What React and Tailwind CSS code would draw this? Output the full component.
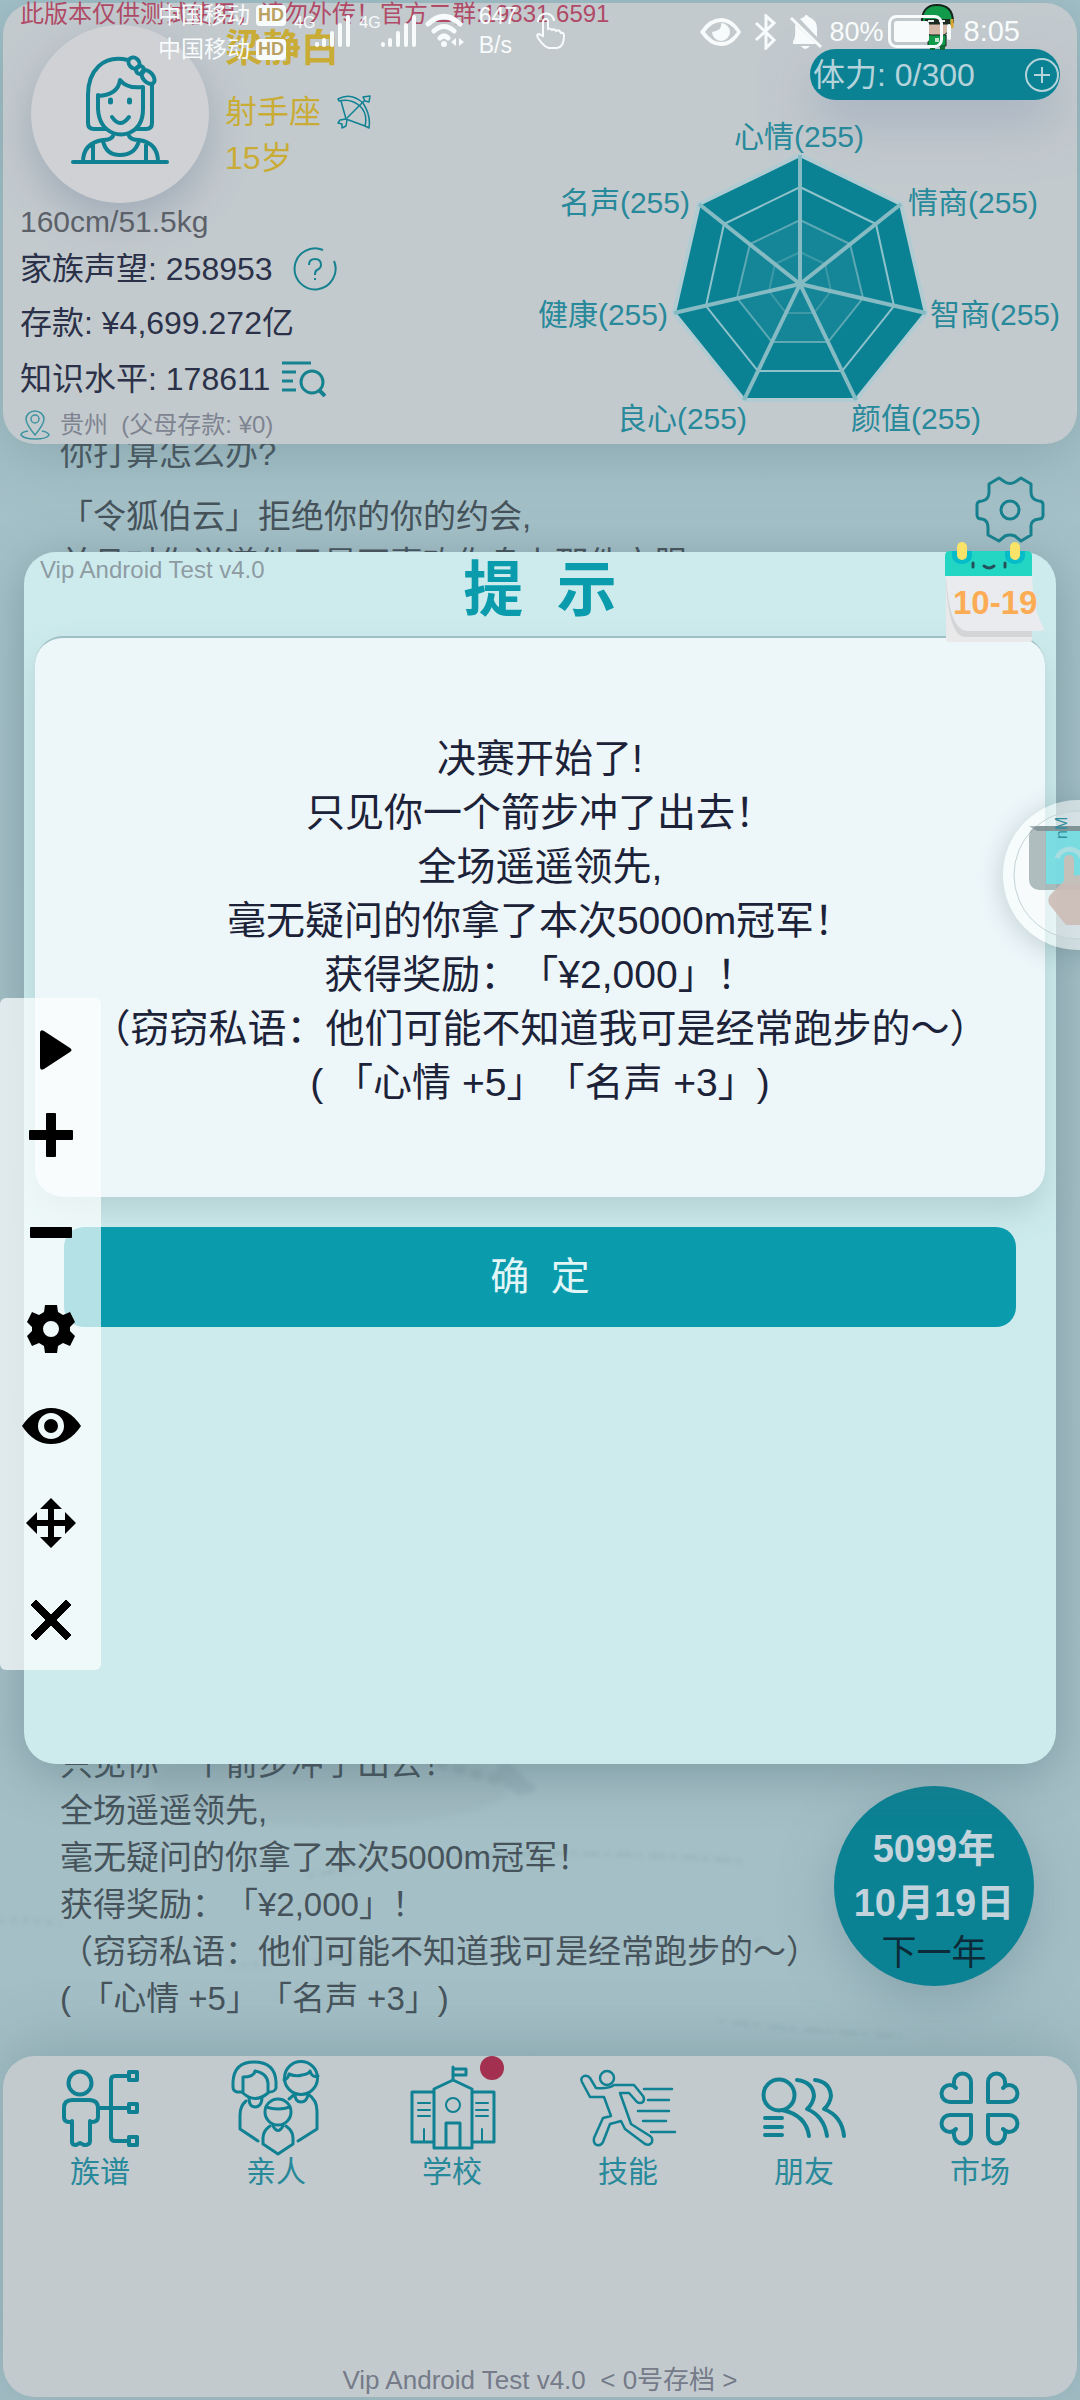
import React from 'react';

const eventLines = [
	'决赛开始了!',
	'只见你一个箭步冲了出去！',
	'全场遥遥领先,',
	'毫无疑问的你拿了本次5000m冠军！',
	'获得奖励：「¥2,000」！',
	'（窃窃私语：他们可能不知道我可是经常跑步的～）',
	'( 「心情 +5」「名声 +3」)',
];

const stats = [
	{ name: '心情', value: 255, x: 799, y: 147, anchor: 'middle' },
	{ name: '情商', value: 255, x: 908, y: 213, anchor: 'start' },
	{ name: '智商', value: 255, x: 930, y: 325, anchor: 'start' },
	{ name: '颜值', value: 255, x: 851, y: 429, anchor: 'start' },
	{ name: '良心', value: 255, x: 747, y: 429, anchor: 'end' },
	{ name: '健康', value: 255, x: 668, y: 325, anchor: 'end' },
	{ name: '名声', value: 255, x: 690, y: 213, anchor: 'end' },
];

const CENTER_X = 800;
const CENTER_Y = 284;
const RADIUS = 129;

function corner(index, ratio) {
	const angle = (Math.PI * 2 * index) / stats.length - Math.PI / 2;
	return [
		Math.round(CENTER_X + Math.cos(angle) * RADIUS * ratio),
		Math.round(CENTER_Y + Math.sin(angle) * RADIUS * ratio),
	];
}

function ring(ratio) {
	return stats.map((item, i) => corner(i, ratio).join(',')).join(' ');
}

function RadarChart() {
	return (
		<svg
			viewBox="530 100 540 342"
			className="w-[540px] h-[342px] text-[30px]"
			role="img"
			aria-label="属性"
		>
			<polygon
				points={ring(1)}
				fill="#0b8294"
				stroke="#b0ccd2"
				strokeWidth="4"
			/>
			<polygon points={ring(0.5)} fill="#ffffff" opacity="0.04" />
			<polygon
				points={ring(0.75)}
				fill="none"
				stroke="#8fc2ca"
				strokeWidth="2"
			/>
			<polygon
				points={ring(0.5)}
				fill="none"
				stroke="#5da8b3"
				strokeWidth="2"
			/>
			<polygon
				points={ring(0.25)}
				fill="none"
				stroke="#3e99a6"
				strokeWidth="2"
			/>
			{stats.map((item, i) => (
				<line
					key={item.name}
					x1={CENTER_X}
					y1={CENTER_Y}
					x2={corner(i, 1)[0]}
					y2={corner(i, 1)[1]}
					stroke="#86bbc4"
					strokeWidth="4"
				/>
			))}
			{stats.map((item) => (
				<text
					key={item.name}
					x={item.x}
					y={item.y}
					textAnchor={item.anchor}
					fill="#27899a"
				>
					{item.name}({item.value})
				</text>
			))}
		</svg>
	);
}

function GirlIcon() {
	return (
		<svg
			viewBox="0 0 178 178"
			className="w-full h-full"
			fill="none"
			stroke="#0f8193"
			strokeWidth="4"
			strokeLinecap="round"
			strokeLinejoin="round"
		>
			<path d="M97 35C72 29 57 46 57 70V98Q57 104 63 104H74M106 104H115Q121 104 121 98V60" />
			<path d="M67 70V84Q68 102 82 108Q90 111 98 108Q112 102 112 84V63" />
			<path d="M67 71Q87 70 89 55Q96 64 112 62" />
			<ellipse cx="103" cy="38" rx="6" ry="5" transform="rotate(48 103 38)" />
			<circle cx="109" cy="45" r="4" />
			<ellipse cx="117" cy="52" rx="8" ry="5" transform="rotate(48 117 52)" />
			<path d="M79.500 75v2M98.500 75v2" strokeWidth="5" />
			<path d="M81 92Q89 104 98 92" />
			<path d="M42 137H136M82 111Q80 115 72 115Q52 118 52 137M98 111Q100 115 108 115Q127 118 127 137M62 120V136M115 120V136" />
			<path d="M72 116Q75 130 89 130Q104 130 108 116" />
		</svg>
	);
}

function BowIcon() {
	return (
		<svg
			viewBox="0 0 34 34"
			className="w-[34px] h-[34px]"
			fill="none"
			stroke="#0f8193"
			strokeWidth="1.500"
			strokeLinejoin="round"
		>
			<path d="M1 4Q14-3 26 8Q34 20 32 33L28 31Q31 19 23 11Q14 3 2 6Z" />
			<path d="M4 6L9 24L28 31M10 23L28 5M26 2L33 1L32 7L28 6Z" />
			<path d="M9 24L3 25L1 28L5 29L5 33L9 31L10 25" />
		</svg>
	);
}

function HeroSprite() {
	return (
		<svg viewBox="0 0 36 46" className="w-9 h-[46px]">
			<path d="M3 20Q2 1 18 1Q34 1 34 18L31 22H5Z" fill="#119a4a" stroke="#14261c" strokeWidth="2" />
			<path d="M7 20H29V28L24 32H12L7 28Z" fill="#d5b9a8" stroke="#14261c" strokeWidth="1" />
			<path d="M6 15H31V20H6Z" fill="#1d2b23" />
			<path d="M9 17h6M20 17h6" stroke="#e8eeee" strokeWidth="2" />
			<path d="M33 15v9" stroke="#d9a531" strokeWidth="3" />
			<path d="M9 31H27V42H9Z" fill="#119a4a" stroke="#14261c" strokeWidth="1" />
			<path d="M16 34h4v4h-4z" fill="#bfe3cd" />
			<path d="M11 42h5v4h-5zM21 42h5v4h-5z" fill="#0d6d36" />
		</svg>
	);
}

function Header() {
	return (
		<header className="relative z-10 m-[3px] mb-0 rounded-[32px] bg-[#c3cace] shadow-[0_10px_60px_rgba(90,120,130,0.35)]">
			<div className="absolute right-[122px] top-px">
				<HeroSprite />
			</div>
			<p className="pl-[17px] text-2xl leading-[22px] text-[#b04a66] whitespace-nowrap">
				此版本仅供测试使用，请勿外传！官方二群:19831 6591
			</p>
			<div className="flex justify-between">
				<div className="pl-[17px] text-[#2b3148] text-[32px] whitespace-nowrap">
					<div className="flex">
						<div className="ml-[11px] w-[178px] h-[178px] rounded-full bg-[#cfd1d5] shadow-[0_16px_40px_rgba(110,125,150,0.4)]">
							<GirlIcon />
						</div>
						<div className="ml-4 leading-[46px] text-[#c9ac36]">
							<h1 className="mb-[18px] text-[38px] font-bold">梁静白</h1>
							<p className="flex items-center gap-4">
								射手座 <BowIcon />
							</p>
							<p>15岁</p>
						</div>
					</div>
					<p className="text-[30px] leading-[38px] text-[#5c6068]">160cm/51.5kg</p>
					<div className="flex items-center h-[55px] gap-5">
						家族声望: 258953
						<button type="button" aria-label="说明">
							<svg viewBox="0 0 44 44" className="w-11 h-11" fill="none" stroke="#16828f" strokeWidth="2">
								<path d="M30 3A20.500 20.500 0 1 0 41 14" />
								<path d="M16 18Q16 12 22 12Q28 12 28 18Q28 21 24 23Q22 24 22 28" />
								<path d="M22 31v2" />
							</svg>
						</button>
					</div>
					<p className="h-[55px] leading-[55px]">存款: ¥4,699.272亿</p>
					<div className="flex items-center h-[55px] gap-3">
						知识水平: 178611
						<button type="button" aria-label="查看知识">
							<svg viewBox="0 0 44 36" className="w-11 h-9" fill="none" stroke="#16828f" strokeWidth="3">
								<path d="M0 2H29M0 11H14M0 20H11M0 29H14" />
								<circle cx="30" cy="21" r="11" />
								<path d="M37 29L43 35" strokeWidth="4" />
							</svg>
						</button>
					</div>
					<div className="flex items-center h-[38px] gap-2.5 text-2xl text-[#7f8491] whitespace-pre">
						<svg viewBox="0 0 30 30" className="w-[30px] h-[30px]" fill="none" stroke="#3d93a1" strokeWidth="1.500">
							<path d="M15 25Q6 14 6 9A9 8 0 0 1 24 9Q24 14 15 25Z" />
							<circle cx="15" cy="9" r="4" />
							<path d="M8 21Q1 22 1 25Q4 29 15 29Q27 29 29 25Q28 22 22 21" />
						</svg>
						{'贵州  (父母存款: ¥0)'}
					</div>
				</div>
				<div className="flex flex-col items-end pt-6 pr-[7px]">
					<div className="mr-2.5 flex items-center justify-between w-[250px] h-[51px] pl-[3px] pr-px rounded-full bg-[#0b8294] text-[#b5d3da] text-[32px] shadow-[0_24px_50px_rgba(140,155,180,0.5)]">
						<span>体力: 0/300</span>
						<button type="button" aria-label="补充体力">
							<svg viewBox="0 0 34 34" className="w-[34px] h-[34px]" fill="none" stroke="currentColor" strokeWidth="2">
								<circle cx="17" cy="17" r="16" />
								<path d="M17 9V25M9 17H25" />
							</svg>
						</button>
					</div>
					<RadarChart />
				</div>
			</div>
		</header>
	);
}

function StoryLog() {
	return (
		<main className="relative flex-1 flex flex-col justify-between -mt-3.5 text-[33px] leading-[47px] text-[#46535b]">
			<svg
				viewBox="0 0 1080 420"
				preserveAspectRatio="none"
				className="absolute inset-x-0 bottom-0 w-full h-[420px] blur-[2px]"
				fill="none"
				stroke="#7f9aa1"
				strokeLinecap="round"
			>
				<ellipse cx="330" cy="150" rx="180" ry="40" fill="#8aa4aa" stroke="none" opacity="0.15" />
				<g opacity="0.3" strokeWidth="3">
					<path d="M440 128Q480 140 530 152" strokeWidth="10" strokeDasharray="4 14" />
					<path d="M505 135L520 150" strokeWidth="18" />
					<path d="M310 240Q470 205 740 225" strokeDasharray="3 9 14 7" />
					<path d="M0 285Q30 283 60 288M230 330Q340 325 430 315M600 320Q680 318 760 305" strokeDasharray="3 9" />
					<path d="M720 385Q800 395 900 400M530 420Q650 435 780 438" strokeDasharray="3 11 16 6" />
				</g>
			</svg>
			<div className="relative flex justify-between pl-[60px]">
				<div>
					<p className="mb-4">你打算怎么办?</p>
					<p>「令狐伯云」拒绝你的你的约会,</p>
					<p>并且对你说道他只是不喜欢你身上那件衣服</p>
				</div>
				<button type="button" aria-label="设置" className="self-start mt-11 mr-[34px]">
					<svg viewBox="0 0 72 72" className="w-[72px] h-[72px]" fill="none" stroke="#16828f" strokeWidth="3" strokeLinejoin="round">
						<path d="M15 10L25 4L31 8Q36 11 41 8L47 4L57 10V18Q57 26 65 27Q69 27 69 31V41Q69 45 65 45Q56 46 57 54V61L47 67L41 62Q36 60 31 62L25 67L14 61V54Q14 46 8 45Q3 45 3 41V31Q3 27 8 27Q15 26 15 18Z" />
						<circle cx="36" cy="36" r="9" />
					</svg>
				</button>
			</div>
			<div className="relative flex items-end justify-between pl-[60px] pr-[46px] pb-[34px]">
				<div className="whitespace-nowrap">
					{eventLines.map((line) => (
						<p key={line}>{line}</p>
					))}
				</div>
				<button
					type="button"
					className="mb-9 w-[200px] h-[200px] pt-[22px] rounded-full bg-[#0b8294] text-[#c3d3dc] text-[38px] leading-[54px] font-bold shadow-[0_16px_50px_rgba(110,140,150,0.5)] whitespace-nowrap"
				>
					<span className="block pt-1">5099年</span>
					<span className="-mx-4">10月19日</span>
					<span className="block text-[35px] leading-[46px] font-normal text-[#0c2a38]">
						下一年
					</span>
				</button>
			</div>
		</main>
	);
}

function FamilyTreeIcon() {
	return (
		<g strokeWidth="4">
			<circle cx="24" cy="23" r="11.500" />
			<path d="M16 62H13Q8 62 8 57V48Q8 40 16 40H33Q42 40 42 48V57Q42 62 36 62H34M16 61V82Q16 85 20 85L24 83L28 85Q34 85 34 81V61" />
			<path d="M42 48H72M72 16H59Q55 16 55 20V77Q55 81 59 81H72" />
			<path d="M73 12h8v8h-8zM73 44h8v8h-8zM73 77h8v8h-8z" />
		</g>
	);
}

function RelativesIcon() {
	return (
		<g strokeWidth="3">
			<path d="M10 32H5Q1 31 1 27V22Q2 2 22 2Q43 2 44 22V28Q43 32 37 32" />
			<path d="M11 33V17Q22 17 23 11Q35 13 36 23V33Q23 44 11 33" />
			<path d="M17 38Q17 47 23 47Q29 47 30 39M14 41Q8 46 8 55V69L26 81" />
			<circle cx="69" cy="18" r="16.500" />
			<path d="M52 20Q56 19 57 14Q64 17 70 15Q77 14 78 11Q80 18 86 16" />
			<path d="M57 39L63 34Q63 42 69 42Q75 42 76 34Q85 40 85 51V69L66 81" />
			<circle cx="46" cy="52" r="13" />
			<path d="M34 47Q46 51 58 47M38 66Q31 71 31 78V84L46 94L61 84V78Q61 71 54 66M41 66Q46 75 51 66" />
		</g>
	);
}

function SchoolIcon() {
	return (
		<g strokeWidth="3">
			<path d="M45 20V7M45 9H58V15H45M26 88V29L45 20L64 29V88ZM26 32H4V82H26M64 32H86V82H64M38 88V63H52V88" />
			<path d="M10 43H22M10 50H22M10 56H22M68 43H80M68 50H80M68 56H80M16 69V81M74 69V81" strokeWidth="2" />
			<circle cx="45" cy="45" r="7" strokeWidth="2" />
		</g>
	);
}

function RunnerIcon() {
	return (
		<g strokeWidth="2.500">
			<circle cx="23" cy="18" r="7" />
			<path d="M12 28L6 18Q4 15 0 16Q-4 18-2 22L6 37H20L27 56L19 58L10 78Q9 84 13 85Q17 86 19 82L26 64L37 61L41 69L61 84Q66 86 68 82Q69 78 66 76L47 64L36 33H45L53 42Q56 44 59 42Q61 39 59 36L50 25H30Q25 29 12 28" />
			<path d="M60 29H88M64 40H85M54 51H85M59 61H82M67 72H91" />
		</g>
	);
}

function FriendsIcon() {
	return (
		<g strokeWidth="4">
			<circle cx="19" cy="35" r="15.500" />
			<path d="M22 50Q46 55 49 76M37 20Q53 22 54 36Q53 44 47 49Q64 56 67 76M55 20Q70 22 71 36Q70 44 64 49Q82 56 84 76M5 58H22M5 67H22M5 75H22" />
		</g>
	);
}

function MarketIcon() {
	const heart = 'M35 42V22A8.500 8.500 0 0 0 18 22Q17 26 20 28Q17 25 14 25A8.500 8.500 0 0 0 14 42Z';
	return (
		<g strokeWidth="4">
			<path d={heart} />
			<path d={heart} transform="translate(87 0) scale(-1 1)" />
			<path d={heart} transform="translate(0 97) scale(1 -1)" />
			<path d={heart} transform="translate(87 97) scale(-1 -1)" />
		</g>
	);
}

const tabs = [
	{ label: '族谱', icon: <FamilyTreeIcon /> },
	{ label: '亲人', icon: <RelativesIcon /> },
	{ label: '学校', icon: <SchoolIcon />, unread: true },
	{ label: '技能', icon: <RunnerIcon /> },
	{ label: '朋友', icon: <FriendsIcon /> },
	{ label: '市场', icon: <MarketIcon /> },
];

function TabBar() {
	return (
		<footer className="relative m-[3px] mt-0 h-[341px] flex flex-col justify-between rounded-[32px] bg-[#c3cace] shadow-[0_-10px_60px_rgba(90,120,130,0.35)]">
			<nav className="grid grid-cols-6 px-[9px] pt-1">
				{tabs.map((tab) => (
					<button
						type="button"
						key={tab.label}
						className="relative flex flex-col items-center text-[30px] leading-[44px] text-[#27899a]"
					>
						<svg
							viewBox="-4 0 96 90"
							className="w-24 h-[90px] overflow-visible"
							fill="none"
							stroke="#0f8193"
							strokeLinecap="round"
							strokeLinejoin="round"
						>
							{tab.icon}
						</svg>
						{tab.label}
						{tab.unread && (
							<span className="absolute -top-1 right-9 w-6 h-6 rounded-full bg-[#a3304e]" />
						)}
					</button>
				))}
			</nav>
			<p className="text-center text-[26px] leading-[34px] text-[#757b89] whitespace-pre">
				{'Vip Android Test v4.0  < 0号存档 >'}
			</p>
		</footer>
	);
}

function CalendarBadge() {
	return (
		<div className="absolute right-[11px] -top-2.5 w-[100px] h-[100px]">
			<svg viewBox="0 0 100 100" className="absolute inset-0 w-full h-full">
				<path d="M1 30H87V98Q87 100 85 100H4Q1 100 1 97Z" fill="#e9e9ea" />
				<path d="M1 40Q4 95 20 95H87V80Z" fill="#d4d5d6" />
				<path d="M1 33H87Q88 70 99 86Q99 89 96 89H22Q4 88 1 33Z" fill="#eaebee" />
				<path d="M0 14Q0 9 5 9H82Q87 9 87 14V34H0Z" fill="#22d6c3" />
				<path d="M7 9H27V14A10 8 0 0 1 7 14ZM60 9H80V14A10 8 0 0 1 60 14Z" fill="#06bcc9" />
				<rect x="12" width="10" height="18" rx="5" fill="#fbe36a" />
				<rect x="65" width="10" height="18" rx="5" fill="#fbe36a" />
				<path d="M28 21v4M60 21v4M39 24Q44 28 49 24" fill="none" stroke="#24505a" strokeWidth="3" strokeLinecap="round" />
			</svg>
			<span className="absolute left-2 top-[43px] text-[33px] leading-9 font-bold text-[#fbac55]">
				10-19
			</span>
		</div>
	);
}

function HintDialog() {
	return (
		<section
			role="dialog"
			aria-label="提示"
			className="absolute z-20 inset-x-6 top-[552px] bottom-[636px] flex flex-col rounded-[32px] bg-[#cdebed] shadow-[0_10px_50px_rgba(70,100,110,0.4)]"
		>
			<span className="absolute left-4 top-1 text-2xl leading-7 text-[#8e9ba3]">
				Vip Android Test v4.0
			</span>
			<h2 className="h-[84px] pt-[7px] text-center text-[60px] leading-[64px] font-bold text-[#0a9bac] whitespace-pre">
				{'提  示'}
			</h2>
			<div className="mx-[11px] min-h-[561px] pt-[94px] rounded-[28px] border-t-2 border-[#9fc0c6] bg-[#edf6f9] text-center text-[39px] leading-[54px] text-[#1c2238] whitespace-nowrap shadow-[0_16px_30px_rgba(150,180,180,0.45)]">
				{eventLines.map((line) => (
					<p key={line}>{line}</p>
				))}
			</div>
			<button
				type="button"
				className="mx-10 mt-[30px] h-[100px] rounded-[20px] bg-[#0a9bac] text-[39px] text-[#e3f6f7] whitespace-pre"
			>
				{'确  定'}
			</button>
			<CalendarBadge />
		</section>
	);
}

const tools = [
	{ name: '播放', art: <path d="M19 13Q19 9 23 11L49 28Q52 30 49 32L23 49Q19 51 19 47Z" /> },
	{ name: '添加', art: <path d="M25 9Q25 8 26 8H34Q35 8 35 9V25H51Q52 25 52 26V34Q52 35 51 35H35V51Q35 52 34 52H26Q25 52 25 51V35H9Q8 35 8 34V26Q8 25 9 25H25Z" /> },
	{ name: '删除', art: <rect x="9" y="25" width="42" height="11" rx="1" /> },
	{
		name: '设置',
		art: (
			<path
				fillRule="evenodd"
				d="M24 6H36L37 13L42 16L49 13L54 23L49 28V32L54 37L49 47L42 44L37 47L36 54H24L23 47L18 44L11 47L6 37L11 32V28L6 23L11 13L18 16L23 13ZM30 22A8 8 0 1 0 30 38A8 8 0 1 0 30 22Z"
			/>
		),
	},
	{
		name: '显示',
		art: (
			<path
				fillRule="evenodd"
				d="M1 30Q13 12 30 12Q48 12 60 30Q48 48 30 48Q13 48 1 30ZM30 17A13 13 0 1 0 30 43A13 13 0 1 0 30 17ZM30 23A7 7 0 1 1 30 37A7 7 0 1 1 30 23Z"
			/>
		),
	},
	{
		name: '移动',
		art: (
			<path d="M30 5L41 16H33V27H44V19L55 30L44 41V33H33V44H41L30 55L19 44H27V33H16V41L5 30L16 19V27H27V16H19Z" />
		),
	},
	{ name: '关闭', art: <path d="M15 10L30 25L45 10L50 15L35 30L50 45L45 50L30 35L15 50L10 45L25 30L10 15Z" stroke="#000" strokeWidth="1" strokeLinejoin="round" /> },
];

function ClickerToolbar() {
	return (
		<aside className="absolute z-30 left-0 top-[998px] w-[101px] pt-1 pb-0.5 flex flex-col rounded-md bg-[#fdffff]/70">
			{tools.map((tool, i) => (
				<button
					type="button"
					key={tool.name}
					aria-label={tool.name}
					className={
						i === 0
							? 'h-[84px] pt-3 flex items-center justify-center'
							: 'h-[97px] flex items-center justify-center'
					}
				>
					<svg viewBox="0 0 60 60" className="w-[60px] h-[60px]">
						{tool.art}
					</svg>
				</button>
			))}
		</aside>
	);
}

function FloatingBubble() {
	return (
		<div className="absolute z-30 -right-[73px] top-[800px] w-[150px] h-[150px] rounded-full bg-white/50 shadow-[0_4px_24px_rgba(60,90,100,0.25)]">
			<svg viewBox="0 0 150 150" className="w-full h-full">
				<circle cx="75" cy="75" r="64" fill="#ffffff" fillOpacity="0.15" stroke="#c2d3d6" />
				<rect x="26" y="26" width="100" height="64" rx="10" fill="#7f9494" opacity="0.6" />
				<rect x="43" y="31" width="70" height="53" fill="#6fe6ec" opacity="0.8" />
				<path d="M26 26h100v5H34z" fill="#5f7377" opacity="0.5" />
				<path d="M54 58A13 12 0 0 1 79 58" fill="none" stroke="#a9dde0" strokeWidth="5" />
				<path d="M61 60Q61 55 66 55Q71 55 71 60V76L90 72V125H63L46 104Q44 98 48 94L61 81Z" fill="#ccbcb6" opacity="0.9" />
				<text transform="translate(64 39) rotate(-90)" fill="#2f8f9d" className="text-[16px]">nM</text>
			</svg>
		</div>
	);
}

function SignalBars() {
	return (
		<div className="flex items-center text-base">
			<span className="self-start leading-5">4G</span>
			<svg viewBox="0 0 36 34" className="w-9 h-[34px]" stroke="currentColor" strokeWidth="4" strokeLinecap="round">
				<path d="M2 31v1M9 27v5M17 20v12M25 12v20M33 4v28" />
			</svg>
		</div>
	);
}

function StatusBar() {
	return (
		<div className="absolute z-40 inset-x-0 top-0 h-16 flex justify-between pl-[158px] pr-[60px] text-[#f8fbfb] whitespace-nowrap">
			<div className="flex">
				<div className="text-[23px] leading-[34px] -mt-0.5">
					{['sim1', 'sim2'].map((sim) => (
						<div key={sim} className="flex items-center gap-1.5">
							中国移动
							<span className="w-[30px] h-[21px] rounded bg-[#f8fbfb] text-center text-lg leading-[21px] font-bold text-[#b9a263]">
								HD
							</span>
						</div>
					))}
				</div>
				<div className="flex items-start gap-2 pt-[13px] ml-2">
					<SignalBars />
					<SignalBars />
					<svg viewBox="0 0 40 36" className="w-10 h-9" fill="none" stroke="currentColor" strokeWidth="5" strokeLinecap="round">
						<path d="M3 11Q19-4 35 11M9 18Q19 9 29 18M15 25Q19 21 23 25" />
						<circle cx="19" cy="31" r="3" fill="currentColor" stroke="none" />
						<path d="M31 25v8l-5-4zM34 25v8l5-4z" fill="currentColor" stroke="none" />
					</svg>
				</div>
				<div className="ml-3.5 pt-0.5 text-[23px] leading-[29px]">
					647
					<br />
					B/s
				</div>
				<svg viewBox="0 0 30 38" className="ml-[18px] mt-3 w-[30px] h-[38px]" fill="none" stroke="currentColor" strokeWidth="2">
					<path d="M3 10A8 8 0 0 1 19 9" />
					<path d="M8 24V10Q8 7 11 7Q13 7 13 10V18Q14 15 17 18Q19 16 21 19Q24 17 26 21Q29 20 29 24Q29 35 22 36H14Q9 35 3 26Q1 22 4 22Z" />
				</svg>
			</div>
			<div className="flex items-center gap-3 text-[27px]">
				<svg viewBox="0 0 42 28" className="w-[42px] h-7">
					<path fillRule="evenodd" fill="currentColor" d="M0 14Q9 0 21 0Q33 0 41 14Q33 28 21 28Q9 28 0 14ZM5 14Q12 24 21 24Q30 24 37 14Q30 4 21 4Q12 4 5 14Z" />
					<path d="M21 5Q23 12 12 14A9 9 0 1 0 21 5Z" fill="currentColor" />
				</svg>
				<svg viewBox="0 0 24 36" className="w-6 h-9" fill="none" stroke="currentColor" strokeWidth="3">
					<path d="M2 9L20 26L12 34V2L20 9L2 26" />
				</svg>
				<svg viewBox="0 0 32 36" className="w-8 h-9" fill="currentColor">
					<path d="M10 5Q12 4 14 3Q16-1 19 3Q27 6 27 15V23ZM5 10L26 30H3V27Q6 25 5 10ZM11 32H20Q15 38 11 32Z" />
					<path d="M1 4L31 33" stroke="currentColor" strokeWidth="3" />
				</svg>
				<span className="-ml-1">80%</span>
				<svg viewBox="0 0 64 34" className="-ml-2 w-16 h-[34px]">
					<rect x="1.500" y="1.500" width="52" height="30" rx="7" fill="none" stroke="currentColor" strokeWidth="3" />
					<rect x="6" y="6" width="35" height="21" rx="3" fill="currentColor" />
					<rect x="59" y="9" width="4" height="16" rx="2" fill="currentColor" />
				</svg>
				<span className="text-[29px]">8:05</span>
			</div>
		</div>
	);
}

export default function App() {
	return (
		<div className="relative min-h-screen flex flex-col overflow-hidden bg-linear-to-b from-[#a3c0c8] via-[#a6c0c7] to-[#a3bec5] font-['Liberation_Sans','Noto_Sans_CJK_SC',sans-serif] [text-spacing-trim:space-all]">
			<Header />
			<StoryLog />
			<TabBar />
			<HintDialog />
			<FloatingBubble />
			<ClickerToolbar />
			<StatusBar />
		</div>
	);
}
